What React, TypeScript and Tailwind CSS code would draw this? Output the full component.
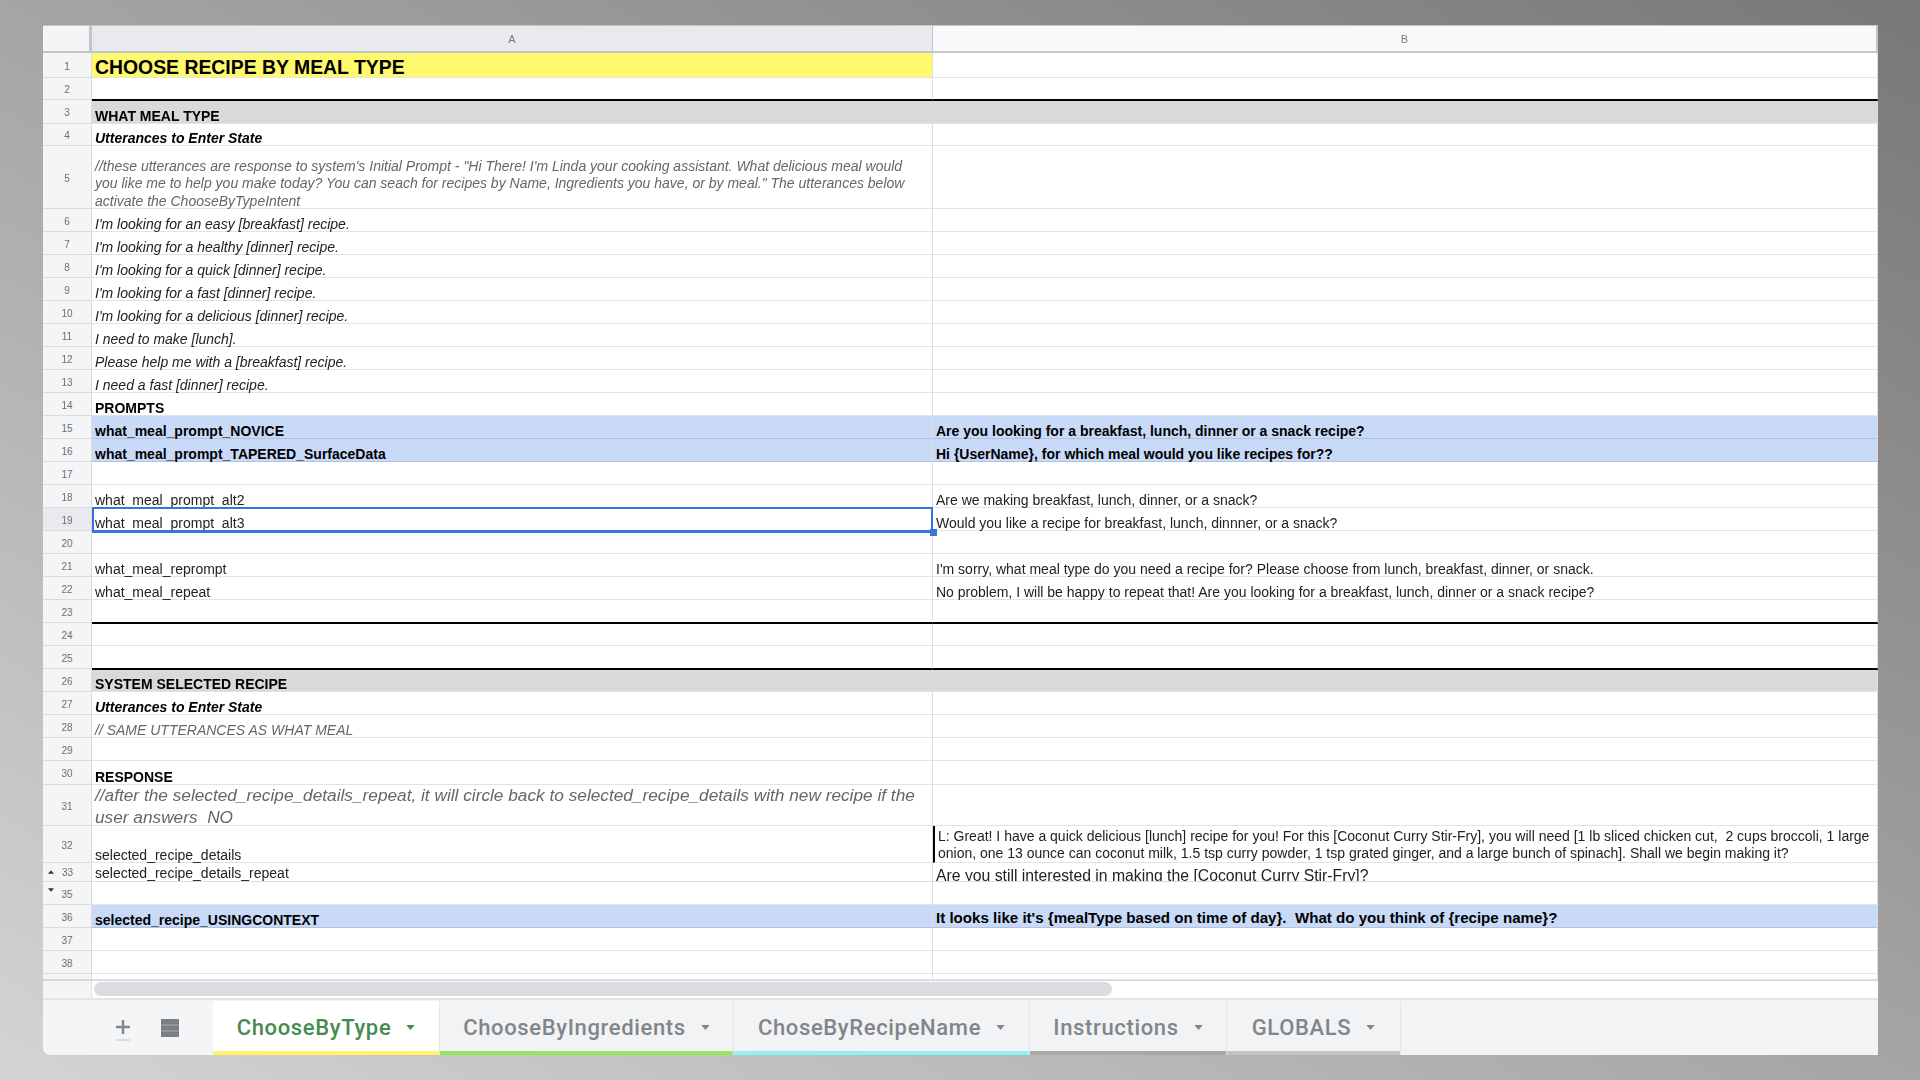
import React from "react";

type Row = {
  n: string;
  h: string;
  a?: string;
  b?: string;
  ca?: string;
  cb?: string;
  bg?: string;
  line?: boolean;
  head?: string;
};

const small = "text-[14px] leading-[14px] text-[#222]";
const smallItalic = "text-[14px] leading-[14px] text-[#222] italic";
const bold = "text-[14px] leading-[14px] text-black font-bold";
const boldItalic = "text-[14px] leading-[14px] text-black font-bold italic";

const h23 = "h-[23px]";

const rows: Row[] = [
  { n: "1", h: "h-[25px]", a: "CHOOSE RECIPE BY MEAL TYPE", ca: "text-[19.4px] leading-[20px] font-bold text-black bg-[#fff96e]" },
  { n: "2", h: "h-[22px]", line: true },
  { n: "3", h: "h-[24px]", a: "WHAT MEAL TYPE", ca: bold, bg: "bg-[#d9d9d9]" },
  { n: "4", h: "h-[22px]", a: "Utterances to Enter State", ca: boldItalic },
  {
    n: "5",
    h: "h-[63px]",
    a: "//these utterances are response to system's Initial Prompt - \"Hi There! I'm Linda your cooking assistant. What delicious meal would\nyou like me to help you make today? You can seach for recipes by Name, Ingredients you have, or by meal.\" The utterances below\nactivate the ChooseByTypeIntent",
    ca: "text-[14px] leading-[17.5px] text-[#666] italic [&>span]:mb-[-2px]",
  },
  { n: "6", h: h23, a: "I'm looking for an easy [breakfast] recipe.", ca: smallItalic },
  { n: "7", h: h23, a: "I'm looking for a healthy [dinner] recipe.", ca: smallItalic },
  { n: "8", h: h23, a: "I'm looking for a quick [dinner] recipe.", ca: smallItalic },
  { n: "9", h: h23, a: "I'm looking for a fast [dinner] recipe.", ca: smallItalic },
  { n: "10", h: h23, a: "I'm looking for a delicious [dinner] recipe.", ca: smallItalic },
  { n: "11", h: h23, a: "I need to make [lunch].", ca: smallItalic },
  { n: "12", h: h23, a: "Please help me with a [breakfast] recipe.", ca: smallItalic },
  { n: "13", h: h23, a: "I need a fast [dinner] recipe.", ca: smallItalic },
  { n: "14", h: h23, a: "PROMPTS", ca: bold },
  { n: "15", h: h23, a: "what_meal_prompt_NOVICE", ca: bold, b: "Are you looking for a breakfast, lunch, dinner or a snack recipe?", cb: bold, bg: "bg-[#c9daf8]" },
  { n: "16", h: h23, a: "what_meal_prompt_TAPERED_SurfaceData", ca: bold, b: "Hi {UserName}, for which meal would you like recipes for??", cb: bold, bg: "bg-[#c9daf8]" },
  { n: "17", h: h23 },
  { n: "18", h: h23, a: "what_meal_prompt_alt2", ca: small, b: "Are we making breakfast, lunch, dinner, or a snack?", cb: small },
  { n: "19", h: h23, a: "what_meal_prompt_alt3", ca: small, b: "Would you like a recipe for breakfast, lunch, dinnner, or a snack?", cb: small, head: "bg-[#e8eaed]" },
  { n: "20", h: h23 },
  { n: "21", h: h23, a: "what_meal_reprompt", ca: small, b: "I'm sorry, what meal type do you need a recipe for? Please choose from lunch, breakfast, dinner, or snack.", cb: small },
  { n: "22", h: h23, a: "what_meal_repeat", ca: small, b: "No problem, I will be happy to repeat that! Are you looking for a breakfast, lunch, dinner or a snack recipe?", cb: small },
  { n: "23", h: h23, line: true },
  { n: "24", h: h23 },
  { n: "25", h: h23, line: true },
  { n: "26", h: h23, a: "SYSTEM SELECTED RECIPE", ca: bold, bg: "bg-[#d9d9d9]" },
  { n: "27", h: h23, a: "Utterances to Enter State", ca: boldItalic },
  { n: "28", h: h23, a: "// SAME UTTERANCES AS WHAT MEAL", ca: "text-[14px] leading-[14px] text-[#666] italic" },
  { n: "29", h: h23 },
  { n: "30", h: "h-[24px]", a: "RESPONSE", ca: bold },
  {
    n: "31",
    h: "h-[41px]",
    a: "//after the selected_recipe_details_repeat, it will circle back to selected_recipe_details with new recipe if the\nuser answers  NO",
    ca: "text-[17.25px] leading-[22px] text-[#666] italic [&>span]:mb-[-3px]",
  },
  {
    n: "32",
    h: "h-[37px]",
    a: "selected_recipe_details",
    ca: small,
    b: "L: Great! I have a quick delicious [lunch] recipe for you! For this [Coconut Curry Stir-Fry], you will need [1 lb sliced chicken cut,  2 cups broccoli, 1 large\nonion, one 13 ounce can coconut milk, 1.5 tsp curry powder, 1 tsp grated ginger, and a large bunch of spinach]. Shall we begin making it?",
    cb: "text-[14px] leading-[17px] text-[#222] border-l-2 border-l-black",
  },
];

const rowsAfter: Row[] = [
  { n: "35", h: h23 },
  { n: "36", h: h23, a: "selected_recipe_USINGCONTEXT", ca: bold, b: "It looks like it's {mealType based on time of day}.  What do you think of {recipe name}?", cb: "text-[15.1px] leading-[18px] font-bold text-black", bg: "bg-[#c9daf8]" },
  { n: "37", h: h23 },
  { n: "38", h: h23 },
  { n: "", h: "h-[6px]" },
];

function Caret({ className }: { className: string }) {
  return (
    <svg viewBox="0 0 10 6" className={className}>
      <path d="M0 0h10L5 6z" fill="currentColor" />
    </svg>
  );
}

function SheetRow({ r }: { r: Row }) {
  const border = r.line
    ? "border-b border-b-black shadow-[0_1px_0_#000]"
    : r.bg === "bg-[#c9daf8]"
      ? "border-b border-b-[#b3c3de]"
      : "border-b border-b-[#e2e3e3]";
  const selected = r.n === "19";
  return (
    <div className={`relative flex ${r.h} shrink-0 ${r.bg ?? ""} ${r.line || selected ? "z-10" : ""}`}>
      <div className={`relative flex w-[49px] shrink-0 items-center justify-center border-r border-b border-[#dadbdc] pt-[2px] text-[10px] text-[#6f6f6f] ${r.head ?? "bg-[#f4f5f6]"}`}>
        {r.n}
        {r.n === "35" && <Caret className="absolute top-[6px] left-[5px] h-[4px] w-[6px] text-[#333]" />}
      </div>
      <div className={`relative flex w-[841px] shrink-0 items-end border-r border-r-[#dcdddd] pl-[3px] whitespace-pre ${border} ${r.ca ?? ""}`}>
        <span>{r.a}</span>
        {selected && <div className="absolute -top-[1px] -right-[1px] -bottom-[3px] left-0 border-2 border-b-[3px] border-[#3f72d9]" />}
      </div>
      <div className={`flex min-w-0 flex-1 items-end ${border} border-r border-r-[#dcdddd] whitespace-pre ${r.cb ?? ""}`}>
        <span className="pl-[3px]">{r.b}</span>
      </div>
      {selected && <div className="absolute top-[21px] left-[887px] z-10 h-[7px] w-[7px] bg-[#3f72d9]" />}
    </div>
  );
}

function Tab({ label, strip, active, w }: { label: string; strip: string; active?: boolean; w: string }) {
  return (
    <div className={`flex ${w} h-[54px] shrink-0 flex-col border-r border-[#e3e5e6] [font-family:Roboto,sans-serif] ${active ? "bg-white" : "bg-[#f1f3f4]"}`}>
      <div className={`flex flex-1 items-center justify-center gap-[15px] pt-[2px] text-[22px] font-medium tracking-[0.65px] ${active ? "text-[#458c50]" : "text-[#80868b]"}`}>
        <span>{label}</span>
        <Caret className="h-[5px] w-[9px]" />
      </div>
      <div className={`h-[4px] ${strip}`} />
    </div>
  );
}

export default function App() {
  return (
    <div className="flex h-[1080px] w-[1920px] items-start overflow-hidden bg-linear-to-tr from-[#d4d4d4] to-[#787878] pt-[25px] pl-[43px] [font-family:'Liberation_Sans',Arial,sans-serif]">
      <div className="flex h-[1030px] w-[1835px] flex-col overflow-hidden rounded-bl-lg bg-white blur-[0.7px]">
        <div className="flex h-[28px] shrink-0 border-t border-b-2 border-[#c4c5c6] bg-[#f8f9fa] text-[11px] text-[#777]">
          <div className="w-[49px] shrink-0 border-r-[3px] border-[#c4c5c6] bg-[#f4f5f6]" />
          <div className="flex w-[841px] shrink-0 items-center justify-center border-r border-[#c4c5c6] bg-[#e8eaed] pt-[1px]">A</div>
          <div className="flex flex-1 items-center justify-center border-r-2 border-[#c4c5c6] pt-[1px]">B</div>
        </div>

        {rows.map((r) => (
          <SheetRow key={r.n} r={r} />
        ))}

        <div className="flex h-[19px] shrink-0">
          <div className="flex w-[49px] shrink-0 items-center justify-start gap-[8px] border-r border-b border-[#dadbdc] bg-[#f4f5f6] pl-[5px] text-[10px] text-[#6f6f6f]">
            <Caret className="h-[4px] w-[6px] rotate-180 text-[#333]" />
            <span>33</span>
          </div>
          <div className="flex w-[841px] shrink-0 items-start border-r border-b border-[#dcdddd] pt-[3px] pl-[3px] text-[14px] leading-[15px] text-[#222]">
            selected_recipe_details_repeat
          </div>
          <div className="flex flex-1 items-start overflow-hidden border-r border-b border-[#dcdddd] pt-[4px] pl-[3px] text-[15.75px] leading-[18px] whitespace-pre text-[#222]">
            Are you still interested in making the [Coconut Curry Stir-Fry]?
          </div>
        </div>

        {rowsAfter.map((r) => (
          <SheetRow key={r.n} r={r} />
        ))}

        <div className="flex h-[18px] shrink-0 border-t border-[#d4d5d6]">
          <div className="w-[49px] shrink-0 border-r border-[#e2e3e3] bg-[#f4f5f6]" />
          <div className="flex-1 pt-[1px] pl-[2px]">
            <div className="h-[14px] w-[1018px] rounded-[7px] bg-[#dadce0]" />
          </div>
        </div>

        <div className="flex flex-1 items-end border-t-2 border-[#e4e5e6] bg-[#f1f3f4]">
          <div className="flex h-[54px] w-[170px] shrink-0 items-center bg-[#f4f5f6] pl-[72px]">
            <svg viewBox="0 0 16 28" className="h-[28px] w-[16px] text-[#80868b]">
              <path d="M8 6v14M1 13h14" stroke="currentColor" strokeWidth="2.4" fill="none" />
              <path d="M1 26h14" stroke="#d0d2d4" strokeWidth="1.5" fill="none" />
            </svg>
            <svg viewBox="0 0 18 18" className="ml-[30px] h-[18px] w-[18px] text-[#7c8084]">
              <rect x="0" y="0" width="18" height="18" fill="currentColor" />
              <path d="M0 6h18M0 12h18" stroke="#a8abae" strokeWidth="1" />
            </svg>
          </div>
          <Tab label="ChooseByType" strip="bg-[#fff56b]" active w="w-[227px]" />
          <Tab label="ChooseByIngredients" strip="bg-[#93e85c]" w="w-[294px]" />
          <Tab label="ChoseByRecipeName" strip="bg-[#8ff3f3]" w="w-[296px]" />
          <Tab label="Instructions" strip="bg-[#a8a8a8]" w="w-[197px]" />
          <Tab label="GLOBALS" strip="bg-[#c4c4c4]" w="w-[174px]" />
        </div>
      </div>
    </div>
  );
}
